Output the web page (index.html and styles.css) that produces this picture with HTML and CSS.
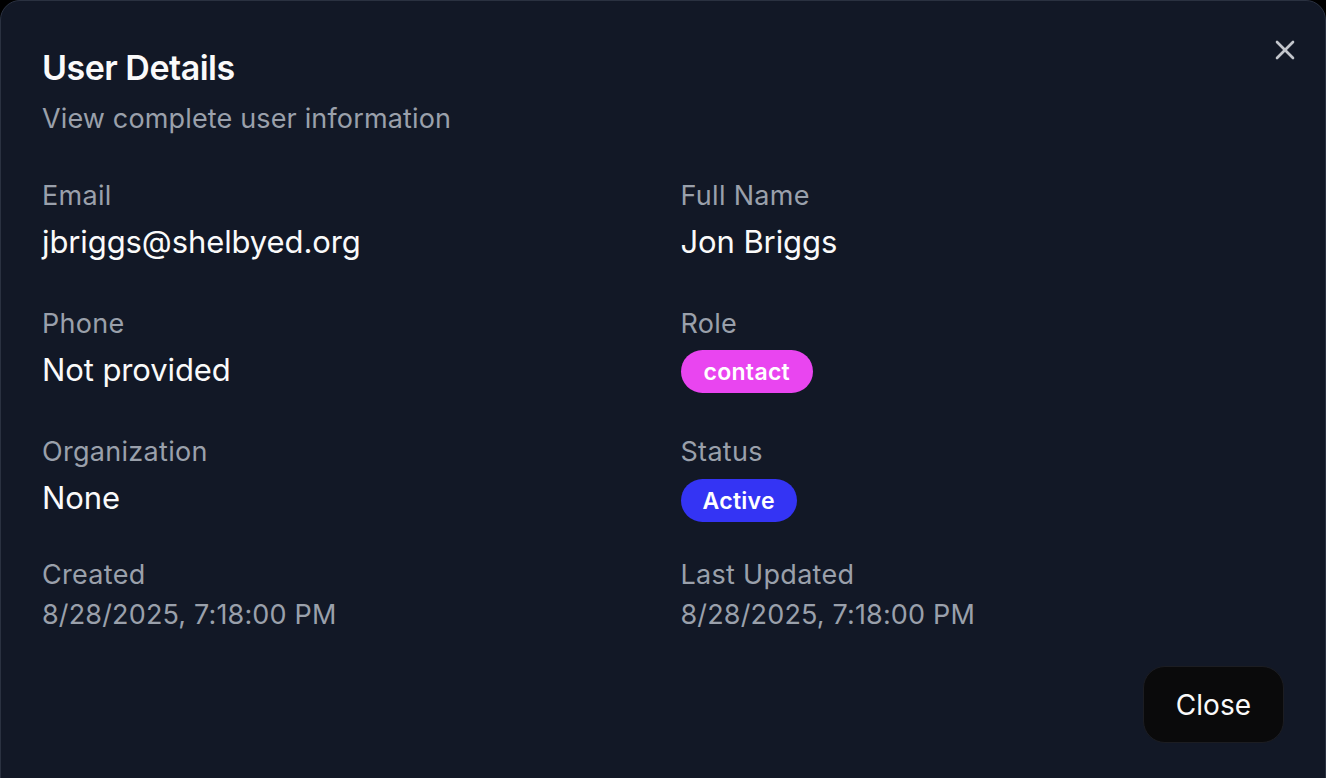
FILE: index.html
```html
<!DOCTYPE html>
<html lang="en">
<head>
<meta charset="utf-8">
<title>User Details</title>
<link rel="stylesheet" href="styles.css">
</head>
<body>
<div class="dialog" role="dialog" aria-labelledby="dlg-title">
  <button class="dialog-x" aria-label="Close">
    <svg viewBox="0 0 20 20" width="20" height="20" fill="none" stroke="currentColor" stroke-width="2.6" stroke-linecap="round"><path d="M2 2 18 18"/><path d="M18 2 2 18"/></svg>
  </button>
  <header class="dialog-header">
    <h2 id="dlg-title" class="dialog-title">User Details</h2>
    <p class="dialog-desc">View complete user information</p>
  </header>
  <div class="fields">
    <div class="field">
      <div class="label">Email</div>
      <div class="value">jbriggs@shelbyed.org</div>
    </div>
    <div class="field">
      <div class="label">Full Name</div>
      <div class="value">Jon Briggs</div>
    </div>
    <div class="field">
      <div class="label">Phone</div>
      <div class="value">Not provided</div>
    </div>
    <div class="field">
      <div class="label">Role</div>
      <div class="badge-wrap"><span class="badge badge-role">contact</span></div>
    </div>
    <div class="field">
      <div class="label">Organization</div>
      <div class="value">None</div>
    </div>
    <div class="field">
      <div class="label">Status</div>
      <div class="badge-wrap badge-wrap-low"><span class="badge badge-status">Active</span></div>
    </div>
  </div>
  <div class="fields times">
    <div class="field">
      <div class="label">Created</div>
      <div class="date">8/28/2025, 7:18:00 PM</div>
    </div>
    <div class="field">
      <div class="label">Last Updated</div>
      <div class="date">8/28/2025, 7:18:00 PM</div>
    </div>
  </div>
  <footer class="dialog-footer">
    <button class="btn-close">Close</button>
  </footer>
</div>
</body>
</html>
```

FILE: styles.css
```css
* { box-sizing: border-box; }
html, body { margin: 0; padding: 0; }
body {
  background: #000;
  font-family: Inter, "Noto Sans", "Liberation Sans", sans-serif;
  color: #f9fafb;
  height: 778px;
  overflow: hidden;
}
.dialog {
  position: relative;
  width: 1326px;
  min-height: 800px;
  background: #121826;
  border: 1px solid #2a3140;
  border-radius: 20px 20px 0 0;
  padding: 45px 41px 0 41px;
}
.dialog-x {
  position: absolute;
  top: 39px;
  right: 30px;
  width: 20px;
  height: 20px;
  padding: 0;
  border: 0;
  background: transparent;
  color: #c3c6cc;
  display: flex;
  cursor: pointer;
}
.dialog-title {
  margin: 0;
  font-size: 34px;
  line-height: 44px;
  font-weight: 600;
  letter-spacing: -0.5px;
  color: #fafafa;
}
.dialog-desc {
  margin: 11px 0 0;
  font-size: 27px;
  line-height: 36px;
  letter-spacing: 0.15px;
  color: #9aa0ab;
}
.fields {
  display: grid;
  grid-template-columns: 1fr 1fr;
  column-gap: 35px;
  row-gap: 40px;
  margin-top: 41px;
}
.fields.times { margin-top: 35px; }
.label {
  font-size: 27px;
  line-height: 36px;
  letter-spacing: 0.3px;
  color: #9aa0ab;
}
.value {
  margin-top: 3px;
  font-size: 31px;
  line-height: 49px;
  letter-spacing: -0.1px;
  color: #fafafa;
}
.date {
  margin-top: 5px;
  font-size: 27px;
  line-height: 34px;
  letter-spacing: 0.15px;
  color: #9aa0ab;
}
.badge-wrap {
  margin-top: 8px;
  display: flex;
}
.badge-wrap-low { margin-top: 9px; }
.badge {
  display: inline-flex;
  align-items: center;
  height: 43px;
  padding: 0 23px;
  border-radius: 999px;
  font-size: 23px;
  font-weight: 600;
  letter-spacing: 0.3px;
  color: #fff;
}
.badge-role { background: #e945f0; }
.badge-status { background: #3434f4; padding: 0 22px; }
.dialog-footer {
  display: flex;
  justify-content: flex-end;
  margin-top: 34px;
}
.btn-close {
  height: 77px;
  padding: 0 32px;
  border-radius: 22px;
  background: #0a0a0b;
  border: 1px solid #1c1d22;
  color: #fafafa;
  font-family: inherit;
  font-size: 28px;
  cursor: pointer;
}
```
